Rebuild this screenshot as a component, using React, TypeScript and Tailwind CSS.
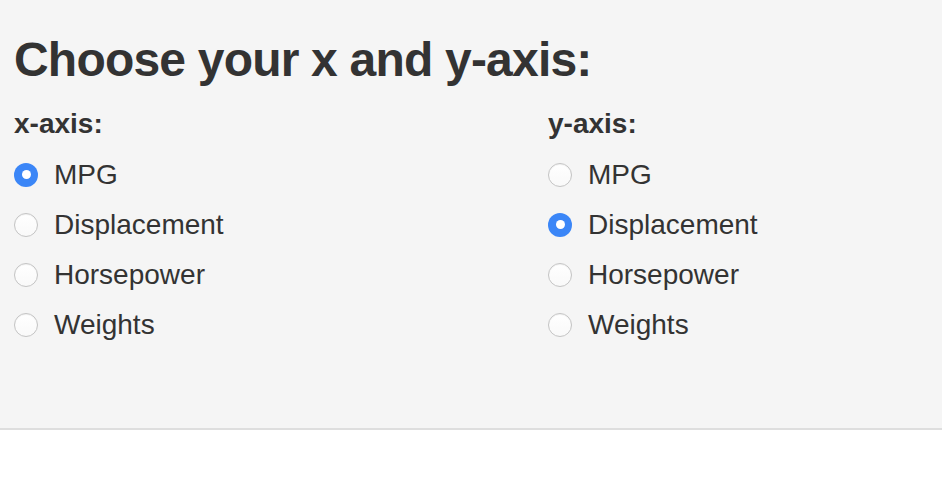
import React from "react";

const options = ["MPG", "Displacement", "Horsepower", "Weights"];

function Radio({ checked }: { checked: boolean }) {
  return checked ? (
    <span className="flex h-[24px] w-[24px] shrink-0 items-center justify-center rounded-full bg-[#3b86f7]">
      <span className="h-[9px] w-[9px] rounded-full bg-white" />
    </span>
  ) : (
    <span className="h-[24px] w-[24px] shrink-0 rounded-full border border-[#c4c4c4] bg-gradient-to-b from-white to-[#f9f9f9] shadow-[inset_0_1px_1px_rgba(0,0,0,0.06)]" />
  );
}

function Group({ label, selected }: { label: string; selected: string }) {
  return (
    <div className="flex flex-col">
      <div className="mb-[6px] h-[40px] text-[28px] font-bold leading-[40px]">{label}</div>
      {options.map((o) => (
        <div key={o} className="flex h-[50px] items-center gap-[16px]">
          <Radio checked={o === selected} />
          <span className="text-[28px] leading-[40px]">{o}</span>
        </div>
      ))}
    </div>
  );
}

export default function App() {
  return (
    <div
      className="w-[942px] h-[496px] bg-white text-[#333333]"
      style={{ fontFamily: '"Liberation Sans", Arial, Helvetica, sans-serif' }}
    >
      <div className="h-[430px] border-b-2 border-[#dedede] bg-[#f5f5f5] pl-[14px] pt-[34px]">
        <h3 className="m-0 text-[48px] font-bold leading-[52.8px] tracking-[-0.8px]">Choose your x and y-axis:</h3>
        <div className="mt-[17px] flex">
          <div className="w-[534px]">
            <Group label="x-axis:" selected="MPG" />
          </div>
          <div>
            <Group label="y-axis:" selected="Displacement" />
          </div>
        </div>
      </div>
    </div>
  );
}
